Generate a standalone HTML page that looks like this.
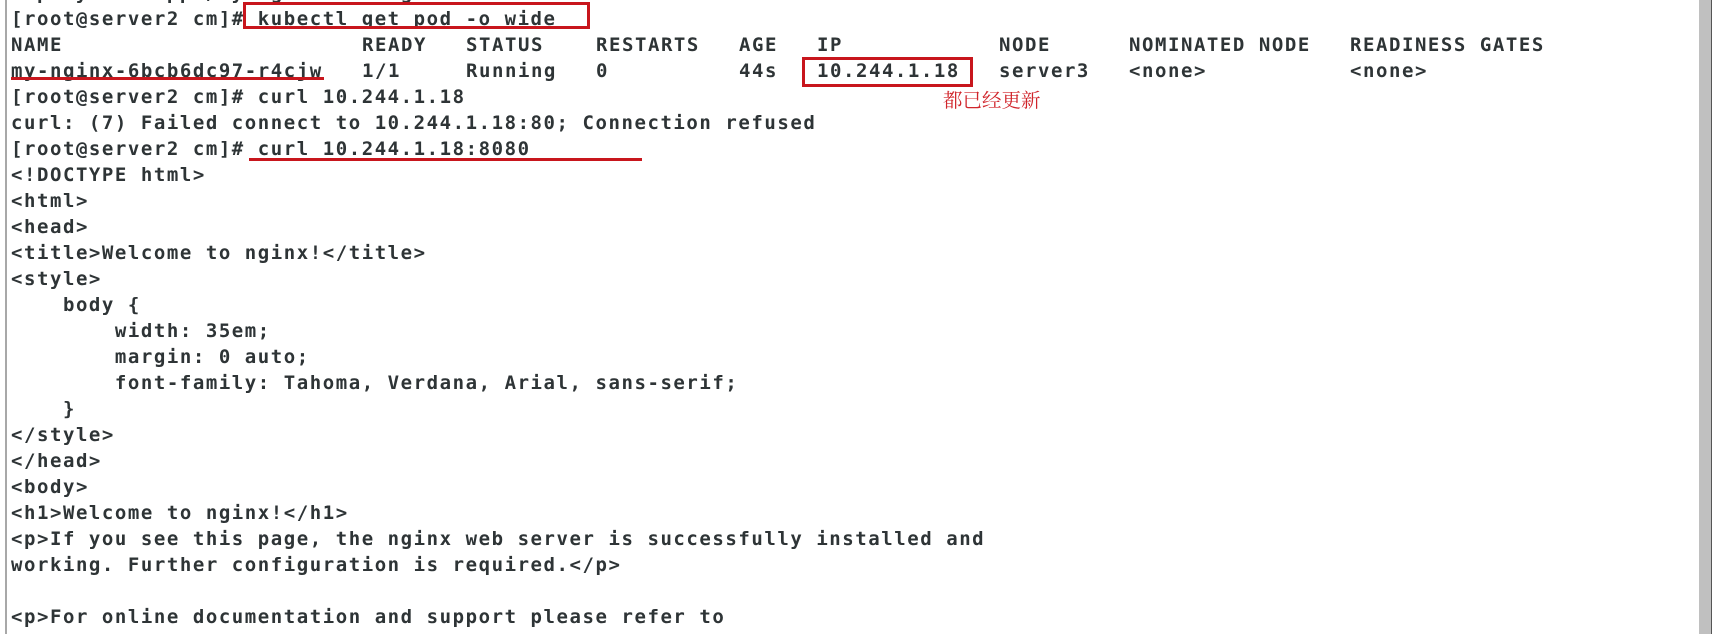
<!DOCTYPE html>
<html><head><meta charset="utf-8"><style>
html,body{margin:0;padding:0;background:#fff;width:1712px;height:634px;overflow:hidden;position:relative}
.l{position:absolute;left:5px;top:0;width:2px;height:634px;background:#a8a8a8}
.sb{position:absolute;left:1699px;top:0;width:12px;height:634px;background:#c0c0c0}
.sbe{position:absolute;left:1711px;top:0;width:1px;height:634px;background:#555}
pre,.c{font-family:"DejaVu Sans Mono","Liberation Mono",monospace;font-weight:bold;font-size:19px;line-height:26px;color:#2e3436;letter-spacing:1.55px;white-space:pre}
pre{position:absolute;left:11px;top:-20.5px;margin:0}
.c{position:absolute}
.r{position:absolute;border:3px solid #c8161d;box-sizing:border-box}
.u{position:absolute;height:3px;background:#c8161d}
.cn{position:absolute;left:943px;top:85px;font-family:"Noto Serif CJK SC",serif;font-size:19.5px;color:#d0252b}
</style></head><body>
<div class="l"></div><div class="sb"></div><div class="sbe"></div>
<pre>deployment.apps/my-nginx configured
[root@server2 cm]# kubectl get pod -o wide


[root@server2 cm]# curl 10.244.1.18
curl: (7) Failed connect to 10.244.1.18:80; Connection refused
[root@server2 cm]# curl 10.244.1.18:8080
&lt;!DOCTYPE html&gt;
&lt;html&gt;
&lt;head&gt;
&lt;title&gt;Welcome to nginx!&lt;/title&gt;
&lt;style&gt;
    body {
        width: 35em;
        margin: 0 auto;
        font-family: Tahoma, Verdana, Arial, sans-serif;
    }
&lt;/style&gt;
&lt;/head&gt;
&lt;body&gt;
&lt;h1&gt;Welcome to nginx!&lt;/h1&gt;
&lt;p&gt;If you see this page, the nginx web server is successfully installed and
working. Further configuration is required.&lt;/p&gt;

&lt;p&gt;For online documentation and support please refer to
</pre>
<div class="c" style="top:31.5px;left:11px">NAME</div>
<div class="c" style="top:31.5px;left:362px">READY</div>
<div class="c" style="top:31.5px;left:466px">STATUS</div>
<div class="c" style="top:31.5px;left:596px">RESTARTS</div>
<div class="c" style="top:31.5px;left:739px">AGE</div>
<div class="c" style="top:31.5px;left:817px">IP</div>
<div class="c" style="top:31.5px;left:999px">NODE</div>
<div class="c" style="top:31.5px;left:1129px">NOMINATED NODE</div>
<div class="c" style="top:31.5px;left:1350px">READINESS GATES</div>
<div class="c" style="top:57.5px;left:11px">my-nginx-6bcb6dc97-r4cjw</div>
<div class="c" style="top:57.5px;left:362px">1/1</div>
<div class="c" style="top:57.5px;left:466px">Running</div>
<div class="c" style="top:57.5px;left:596px">0</div>
<div class="c" style="top:57.5px;left:739px">44s</div>
<div class="c" style="top:57.5px;left:817px">10.244.1.18</div>
<div class="c" style="top:57.5px;left:999px">server3</div>
<div class="c" style="top:57.5px;left:1129px">&lt;none&gt;</div>
<div class="c" style="top:57.5px;left:1350px">&lt;none&gt;</div>
<div class="r" style="left:243px;top:2px;width:347px;height:27px"></div>
<div class="u" style="left:11px;top:77px;width:313px"></div>
<div class="r" style="left:802px;top:57px;width:171px;height:30px"></div>
<div class="cn">都已经更新</div>
<div class="u" style="left:249px;top:158px;width:393px"></div>
</body></html>
